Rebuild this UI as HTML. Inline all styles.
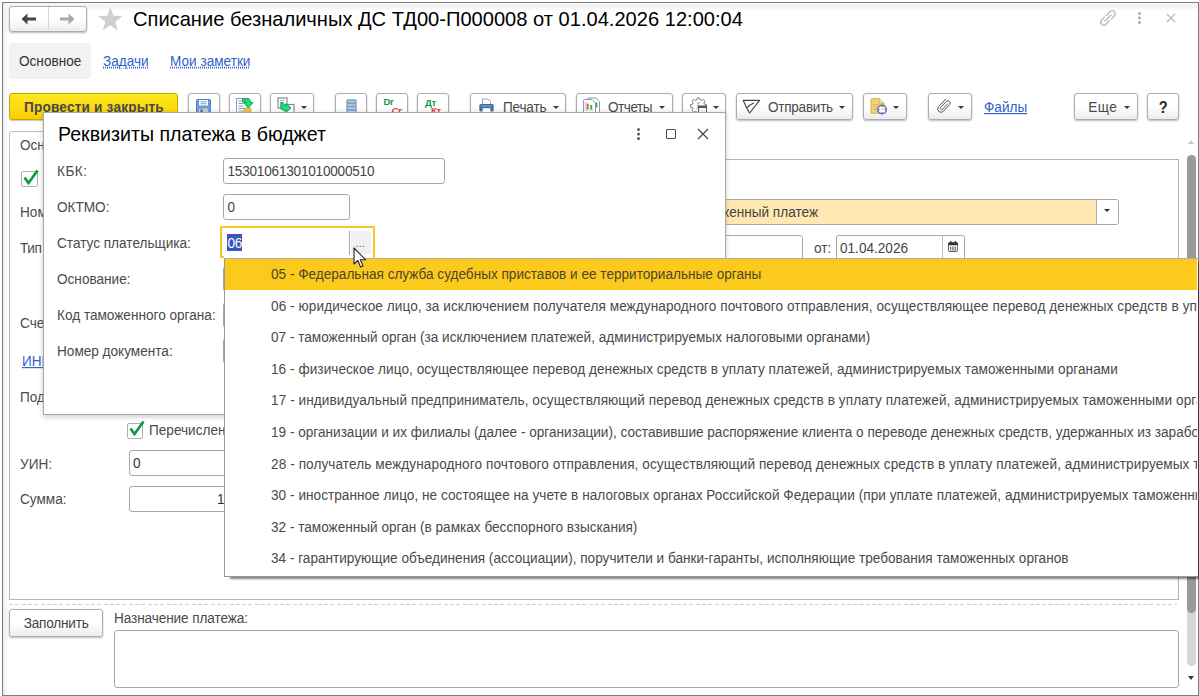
<!DOCTYPE html>
<html lang="ru">
<head>
<meta charset="utf-8">
<title>Списание безналичных ДС</title>
<style>
*{box-sizing:border-box;margin:0;padding:0}
html,body{width:1199px;height:696px;overflow:hidden;background:#fff}
body{font-family:"Liberation Sans",Arial,sans-serif;font-size:13.6px;color:#4a4a4a;position:relative;line-height:16px}
.a{position:absolute;white-space:nowrap}
.s{transform:translateY(1px) scaleY(1.14);transform-origin:0 12.7px}
.li span{display:inline-block;transform:scaleY(1.14);transform-origin:0 20.5px}
.btn{border:1px solid #adadad;border-radius:3px;background:linear-gradient(#fff 0%,#fff 50%,#ececec 100%);box-shadow:0 1px 2px rgba(0,0,0,.28);height:27px;top:93px}
.inp{border:1px solid #a8a8a8;border-radius:3px;background:#fff;height:26px}
.lnk{color:#2f5fc9;text-decoration:underline}
.car{width:0;height:0;border-left:3.4px solid transparent;border-right:3.4px solid transparent;border-top:3.8px solid #3a3a3a;top:105.8px}
.t{top:99px;color:#4a4a4a}
.li{left:225px;width:972px;height:31.6px;line-height:31.6px;padding-left:46px;color:#4a4a4a;overflow:hidden}
</style>
</head>
<body>
<!-- window frame -->
<div class="a" style="left:2px;top:2px;width:1197px;height:694px;border:1px solid #7d7d7d;background:#fff"></div>
<div class="a" style="left:3px;top:3px;width:1195px;height:8px;background:linear-gradient(#fafafa,#f1f1f1 40%,#fff)"></div>
<div class="a" style="left:3px;top:3px;width:6px;height:692px;background:linear-gradient(90deg,#ececec,#fff)"></div>

<!-- header -->
<div class="a btn" style="left:9px;top:6px;width:78px;height:26px"></div>
<div class="a" style="left:48px;top:7px;width:1px;height:23px;background:#d4d4d4"></div>
<svg class="a" style="left:21px;top:13px" width="16" height="12" viewBox="0 0 16 12"><path d="M0.5 6 L6.5 0.5 L6.5 4.6 L15 4.6 L15 7.4 L6.5 7.4 L6.5 11.5 Z" fill="#454545"/></svg>
<svg class="a" style="left:59px;top:13px" width="16" height="12" viewBox="0 0 16 12"><path d="M15.5 6 L9.5 0.5 L9.5 4.6 L1 4.6 L1 7.4 L9.5 7.4 L9.5 11.5 Z" fill="#a9a9a9"/></svg>
<svg class="a" style="left:97px;top:6px" width="26.6" height="25.6" viewBox="0 0 26 25"><path d="M13 1 L16 9.6 L25 9.8 L17.8 15.3 L20.4 24 L13 18.8 L5.6 24 L8.2 15.3 L1 9.8 L10 9.6 Z" fill="#cfcfcf"/></svg>
<div class="a" id="title" style="left:133px;top:7px;font-size:20.1px;line-height:24px;color:#000;transform:scaleY(1.05);transform-origin:0 19px">Списание безналичных ДС ТД00-П000008 от 01.04.2026 12:00:04</div>
<svg class="a" style="left:1098px;top:9px" width="20" height="18" viewBox="0 0 20 18" fill="none" stroke="#b9b9b9" stroke-width="1.4" stroke-linecap="round"><path d="M8.5 6.2 L12 2.7 A3 3 0 0 1 16.3 7 L13.6 9.7"/><path d="M11.5 11.8 L8 15.3 A3 3 0 0 1 3.7 11 L6.4 8.3"/><path d="M7 12 L13 6"/></svg>
<svg class="a" style="left:1137px;top:11px" width="5" height="14" viewBox="0 0 5 14" fill="#ababab"><circle cx="2.5" cy="2.5" r="1.5"/><circle cx="2.5" cy="7" r="1.5"/><circle cx="2.5" cy="11.5" r="1.5"/></svg>
<svg class="a" style="left:1166px;top:13px" width="10" height="10" viewBox="0 0 10 10" stroke="#b5b5b5" stroke-width="1.1" fill="none"><path d="M1 1 L9 9 M9 1 L1 9"/></svg>

<!-- tabs -->
<div class="a" style="left:9px;top:43px;width:82px;height:36px;background:#f2f2f2;border-radius:4px"></div>
<div class="a s" style="left:19px;top:53px;color:#333">Основное</div>
<div class="a s lnk" style="left:103px;top:53px;text-decoration-style:dotted">Задачи</div>
<div class="a s lnk" style="left:170px;top:53px;text-decoration-style:dotted">Мои заметки</div>

<!-- toolbar -->
<div class="a" style="left:9px;top:93px;width:169px;height:27px;border:1px solid #c6a700;border-radius:3px;background:linear-gradient(#ffe81f,#f8d000);box-shadow:0 1px 1px rgba(0,0,0,.22)"></div>
<div class="a s" style="left:24px;top:99px;font-weight:bold;color:#47474f;letter-spacing:.2px">Провести и закрыть</div>
<div class="a btn" style="left:188px;width:32px"></div>
<div class="a btn" style="left:229px;width:32px"></div>
<div class="a btn" style="left:270px;width:44px"></div>
<div class="a btn" style="left:335px;width:32px"></div>
<div class="a btn" style="left:376px;width:32px"></div>
<div class="a btn" style="left:417px;width:32px"></div>
<div class="a btn" style="left:470px;width:96px"></div>
<div class="a btn" style="left:576px;width:97px"></div>
<div class="a btn" style="left:682px;width:44px"></div>
<div class="a btn" style="left:736px;width:117px"></div>
<div class="a btn" style="left:863px;width:44px"></div>
<div class="a btn" style="left:928px;width:44px"></div>
<div class="a btn" style="left:1074px;width:64px"></div>
<div class="a btn" style="left:1147px;width:32px"></div>
<div class="a s t" style="left:503px;letter-spacing:-0.2px">Печать</div><div class="a car" style="left:552.5px"></div>
<div class="a s t" style="left:608px;letter-spacing:-0.5px">Отчеты</div><div class="a car" style="left:658.9px"></div>
<div class="a car" style="left:712.8px"></div>
<div class="a s t" style="left:768px;letter-spacing:-0.28px">Отправить</div><div class="a car" style="left:839.3px"></div>
<div class="a car" style="left:893.1px"></div>
<div class="a car" style="left:958.1px"></div>
<div class="a s lnk" style="left:984px;top:99px">Файлы</div>
<div class="a s t" style="left:1088.3px;letter-spacing:.4px">Еще</div><div class="a car" style="left:1123.7px"></div>
<div class="a s" style="left:1158.7px;top:99px;font-weight:bold;color:#222;font-size:14.5px;line-height:16px">?</div>
<div class="a car" style="left:300.5px"></div>


<!-- toolbar icons -->
<svg class="a" style="left:196px;top:99px" width="15" height="15" viewBox="0 0 15 15"><rect x="0.5" y="0.5" width="14" height="14" rx="1" fill="#6e9bd8" stroke="#4f7fc0"/><rect x="3" y="1" width="9" height="5.5" fill="#fff"/><path d="M4.5 2.8h6M4.5 4.8h6" stroke="#6e9bd8" stroke-width="1"/><rect x="3" y="9.5" width="9" height="5" fill="#c9c9c9"/><rect x="4.5" y="10.5" width="2" height="3.5" fill="#2f5fae"/></svg>
<svg class="a" style="left:236px;top:98px" width="18" height="16" viewBox="0 0 18 16"><rect x="0.5" y="0.5" width="12" height="15" fill="#fff" stroke="#8aa0bd"/><path d="M2.5 3h4M2.5 5.5h5M2.5 8h5M2.5 10.5h6M2.5 13h6" stroke="#8c9cb3" stroke-width="1"/><rect x="8" y="10" width="7" height="5" fill="#e8c24a" stroke="#c9a22f" stroke-width=".6"/><path d="M6.5 0.8 L12.5 0.8 Q14.3 1 14.3 3 L14.3 4.6 L17 4.6 L12.3 10 L7.6 4.6 L10.6 4.6 L10.6 3.9 L6.5 3.9 Z" fill="#1fe07a" stroke="#0c9a46" stroke-width=".9" stroke-linejoin="round"/></svg>
<svg class="a" style="left:277px;top:97px" width="18" height="17" viewBox="0 0 18 17"><rect x="1" y="1" width="9" height="10" fill="#fff" stroke="#7c8ba1" stroke-width="1.2"/><path d="M3 3.5h5" stroke="#a9b6c9" stroke-width="1"/><rect x="8" y="7.5" width="9" height="9" fill="#fff" stroke="#7c8ba1" stroke-width="1.2"/><path d="M3.8 5.5 L6.3 5.5 L6.3 8.6 L9.2 8.6 L9.2 6.6 L14 11 L9.2 15.2 L9.2 13 L5.6 13 Q3.8 12.8 3.8 11 Z" fill="#1fe07a" stroke="#0c9a46" stroke-width=".9" stroke-linejoin="round"/></svg>
<svg class="a" style="left:346px;top:99px" width="11" height="15" viewBox="0 0 11 15"><rect x="0.3" y="0.3" width="10.4" height="14.4" rx="1.5" fill="#7f9fc0"/><path d="M1.5 2.6h8M1.5 5.9h8M1.5 9.2h8M1.5 12.5h8" stroke="#b9cde1" stroke-width="1.5"/></svg>
<div class="a" style="left:383.5px;top:96px;font-size:9.5px;line-height:12px;font-weight:bold;color:#0f9a4a;letter-spacing:-0.3px">Dr</div>
<div class="a" style="left:391.5px;top:104.5px;font-size:9.5px;line-height:12px;font-weight:bold;font-style:italic;color:#e03a3a;letter-spacing:-0.3px">Cr</div>
<div class="a" style="left:425px;top:96.5px;font-size:9.5px;line-height:12px;font-weight:bold;color:#0f9a4a;letter-spacing:-0.2px">Дт</div>
<div class="a" style="left:431px;top:105px;font-size:9.5px;line-height:12px;font-weight:bold;color:#e03a3a;letter-spacing:-0.2px">Кт</div>
<svg class="a" style="left:479px;top:98px" width="15" height="15" viewBox="0 0 15 15"><path d="M3.5 6.5 L3.5 1 L9 1 L11.5 3.5 L11.5 6.5" fill="#fff" stroke="#8fa3be" stroke-width="1"/><rect x="0.3" y="6" width="14.4" height="7.5" rx="1.6" fill="#3f6fa8"/><path d="M2 8h11" stroke="#8fb0d8" stroke-width="1"/><rect x="3.6" y="10.2" width="7.8" height="4.8" fill="#fff"/></svg>
<svg class="a" style="left:583px;top:97px" width="18" height="17" viewBox="0 0 18 17"><path d="M5 3 L5 1 L13 1 L16.5 4.5 L16.5 17 L12.5 17" fill="#fff" stroke="#8a9bb0" stroke-width="1"/><path d="M0.5 3.5 Q0.5 2.5 1.5 2.5 L9 2.5 L12.5 6 L12.5 17 L0.5 17 Z" fill="#fff" stroke="#8a9bb0" stroke-width="1"/><rect x="3.6" y="6.5" width="2" height="6" fill="#f04a3a"/><rect x="7.2" y="8" width="2" height="4.5" fill="#35b535"/><rect x="12.8" y="5.5" width="1.6" height="5" fill="#35b535"/><path d="M2.2 5v8.2h8.8" stroke="#b7c3d1" stroke-width=".8" fill="none"/></svg>
<svg class="a" style="left:689px;top:97px" width="21" height="17" viewBox="0 0 21 17"><path d="M8.3 1 L10.7 1 L11.2 2.9 L12.5 3.5 L14.2 2.5 L15.9 4.2 L14.9 5.9 L15.5 7.2 L17.4 7.7 L17.4 10.1 L15.5 10.6 L14.9 11.9 L15.9 13.6 L14.2 15.3 L12.5 14.3 L11.2 14.9 L10.7 16.8 L8.3 16.8 L7.8 14.9 L6.5 14.3 L4.8 15.3 L3.1 13.6 L4.1 11.9 L3.5 10.6 L1.6 10.1 L1.6 7.7 L3.5 7.2 L4.1 5.9 L3.1 4.2 L4.8 2.5 L6.5 3.5 L7.8 2.9 Z" fill="#fff" stroke="#6b6b6b" stroke-width=".9" stroke-linejoin="round"/><path d="M8 6.5 L10.5 5.5 M8 9 L9.5 7.5 M7.6 11.5 L9 10" stroke="#777" stroke-width=".9"/><rect x="9.5" y="9" width="8" height="8" fill="#f4f4f4" stroke="#555" stroke-width="1"/><rect x="9.5" y="9" width="8" height="2" fill="#555"/></svg>
<svg class="a" style="left:742px;top:99px" width="19" height="16" viewBox="0 0 19 16"><path d="M1.2 1.3 L17.6 1.3 L7.6 14 L4.8 9.2 Z" fill="none" stroke="#444" stroke-width="1.15" stroke-linejoin="round"/><path d="M4.9 9 Q7.5 5.5 12 4" fill="none" stroke="#444" stroke-width="1.1"/></svg>
<svg class="a" style="left:870px;top:98px" width="18" height="17" viewBox="0 0 18 17"><path d="M1 1.5 Q1 0.7 1.8 0.7 L9.5 0.7 L14 5 L14 15.3 L1 15.3 Z" fill="#f0d37a" stroke="#d6b244" stroke-width="1"/><path d="M9.5 0.7 L9.5 5 L14 5" fill="#f8e7aa" stroke="#d6b244" stroke-width=".8"/><path d="M3 6.5h5M3 9h4M3 11.5h3" stroke="#d9bb58" stroke-width="1"/><circle cx="12" cy="11.5" r="4.3" fill="#fff" stroke="#3f78c4" stroke-width="1.5"/><path d="M12 7.9v1.2M12 13.9v1.2M8.4 11.5h1.2M14.4 11.5h1.2" stroke="#e84545" stroke-width="1.3"/><path d="M12 11.5 L13.6 9.8" stroke="#5d8fd0" stroke-width=".9"/></svg>
<svg class="a" style="left:936px;top:97px" width="16" height="17" viewBox="0 0 16 17" fill="none" stroke="#555" stroke-width="1" stroke-linecap="round"><path d="M9.6 2.2 L2.6 9.6 A3.3 3.3 0 0 0 7.4 14.2 L13.6 7.6 A2.3 2.3 0 0 0 10.3 4.4 L4.7 10.4 A1.3 1.3 0 0 0 6.6 12.2 L11.6 6.9"/></svg>

<!-- main panel -->
<div class="a" style="left:9px;top:131px;width:60px;height:30px;border:1px solid #c0c0c0;border-bottom:none;border-radius:3px 3px 0 0;background:#fff"></div>
<div class="a" style="left:9px;top:159px;width:1170px;height:441px;border:1px solid #b4b4b4;border-top-color:#b4b4b4;background:#fff"></div>
<div class="a" style="left:10px;top:159px;width:58px;height:2px;background:#fff"></div>
<div class="a s" style="left:20px;top:137px">Основное</div>
<div class="a" style="left:21px;top:171px;width:17px;height:16px;border:1px solid #b0b0b0;border-radius:2px;background:#fff"></div>
<svg class="a" style="left:22px;top:168px" width="18" height="18" viewBox="0 0 18 18"><path d="M2.5 9.5 L6.5 15 L15.5 2.5" fill="none" stroke="#0a9a3e" stroke-width="2.6"/></svg>
<div class="a s" style="left:20px;top:204px">Номер:</div>
<div class="a s" style="left:20px;top:240px;letter-spacing:-.4px">Тип документа:</div>
<div class="a s" style="left:20px;top:315px">Счет:</div>
<div class="a s lnk" style="left:22px;top:353px">ИНН</div>
<div class="a s" style="left:20px;top:389px">Подразделение:</div>
<div class="a" style="left:127px;top:423px;width:16px;height:16px;border:1px solid #b0b0b0;border-radius:2px;background:#fff"></div>
<svg class="a" style="left:128px;top:419px" width="18" height="18" viewBox="0 0 18 18"><path d="M2.5 9.5 L6.5 15 L15.5 2.5" fill="none" stroke="#0a9a3e" stroke-width="2.6"/></svg>
<div class="a s" style="left:149px;top:422px">Перечисление в бюджет</div>
<div class="a s" style="left:20px;top:456px">УИН:</div>
<div class="a inp" style="left:129px;top:450px;width:300px"></div>
<div class="a s" style="left:133px;top:455px;color:#333">0</div>
<div class="a s" style="left:20px;top:491px">Сумма:</div>
<div class="a inp" style="left:129px;top:486px;width:300px"></div>
<div class="a s" style="left:217px;top:491px;color:#333">1</div>
<div class="a inp" style="left:500px;top:199px;width:619px;background:#ffe8b2;border-color:#a8a8a8"></div>
<div class="a" style="left:1095.5px;top:200px;width:22.5px;height:24px;background:#fff;border-left:1px solid #b0b0b0;border-radius:0 2px 2px 0"></div>
<div class="a" style="left:1103.5px;top:209.2px;width:0;height:0;border-left:3.2px solid transparent;border-right:3.2px solid transparent;border-top:3.6px solid #333"></div>
<div class="a s" style="right:381px;top:204px;color:#444">Таможенный платеж</div>
<div class="a inp" style="left:500px;top:235px;width:303px"></div>
<div class="a s" style="left:814px;top:240px">от:</div>
<div class="a inp" style="left:836px;top:235px;width:129px"></div>
<div class="a" style="left:942px;top:236px;width:1px;height:24px;background:#c0c0c0"></div>
<div class="a s" style="left:840px;top:240px;color:#444">01.04.2026</div>
<svg class="a" style="left:947.5px;top:241px" width="10.2" height="11" viewBox="0 0 12 13"><rect x="0.5" y="2" width="11" height="10.5" rx="1.5" fill="#fff" stroke="#333" stroke-width="1"/><rect x="0.5" y="2" width="11" height="3" fill="#333"/><rect x="2.5" y="0" width="1.6" height="3" fill="#333"/><rect x="7.9" y="0" width="1.6" height="3" fill="#333"/><path d="M3 6.5v5M5 6.5v5M7 6.5v5M9 6.5v5" stroke="#555" stroke-width="1"/></svg>

<!-- scrollbar -->
<div class="a" style="left:1187px;top:155px;width:9px;height:511px;border-radius:4.5px;background:#d6d6d6"></div>
<div class="a" style="left:1187px;top:155px;width:9px;height:458px;border-radius:4.5px;background:#999"></div>
<div class="a" style="left:1187.8px;top:140px;width:0;height:0;border-left:3.5px solid transparent;border-right:3.5px solid transparent;border-bottom:4.5px solid #c6c6c6"></div>
<div class="a" style="left:1188.2px;top:676.4px;width:0;height:0;border-left:3.3px solid transparent;border-right:3.3px solid transparent;border-top:4.3px solid #3a3a3a"></div>

<!-- bottom -->
<div class="a" style="left:9px;top:604px;width:1168px;height:1px;background:repeating-linear-gradient(90deg,#cfcfcf 0,#cfcfcf 4px,transparent 4px,transparent 6.3px)"></div>
<div class="a btn" style="left:9px;top:609px;width:94px;height:28px"></div>
<div class="a s" style="left:23.7px;top:615px;color:#444;letter-spacing:-.2px">Заполнить</div>
<div class="a s" style="left:114px;top:610px;letter-spacing:-.1px">Назначение платежа:</div>
<div class="a inp" style="left:114px;top:630px;width:1065px;height:58px"></div>

<!-- dialog -->
<div class="a" style="left:43px;top:112px;width:683px;height:303px;background:#fff;border:1px solid #a6a6a6;box-shadow:0 2px 5px rgba(0,0,0,.2)"></div>
<div class="a" style="left:58px;top:122px;font-size:19.6px;line-height:24px;color:#000;transform:scaleY(1.05);transform-origin:0 19px">Реквизиты платежа в бюджет</div>
<svg class="a" style="left:636px;top:127px" width="5" height="14" viewBox="0 0 5 14" fill="#5a5a5a"><circle cx="2.5" cy="2.5" r="1.5"/><circle cx="2.5" cy="7" r="1.5"/><circle cx="2.5" cy="11.5" r="1.5"/></svg>
<div class="a" style="left:666px;top:129px;width:10px;height:10px;border:1.5px solid #484848;border-radius:1px"></div>
<svg class="a" style="left:697px;top:128px" width="12" height="12" viewBox="0 0 12 12" stroke="#444" stroke-width="1.2" fill="none"><path d="M1 1 L11 11 M11 1 L1 11"/></svg>
<div class="a s" style="left:57px;top:163px;letter-spacing:.5px">КБК:</div>
<div class="a s" style="left:57px;top:199px">ОКТМО:</div>
<div class="a s" style="left:57px;top:235px">Статус плательщика:</div>
<div class="a s" style="left:57px;top:271px">Основание:</div>
<div class="a s" style="left:57px;top:307px">Код таможенного органа:</div>
<div class="a s" style="left:57px;top:343px">Номер документа:</div>
<div class="a inp" style="left:223px;top:158px;width:222px"></div>
<div class="a s" style="left:227.5px;top:163px;color:#444;letter-spacing:-.22px">15301061301010000510</div>
<div class="a inp" style="left:223px;top:194px;width:127px"></div>
<div class="a s" style="left:227.5px;top:199px;color:#444">0</div>
<div class="a inp" style="left:223px;top:266px;width:127px"></div>
<div class="a inp" style="left:223px;top:302px;width:127px"></div>
<div class="a inp" style="left:223px;top:338px;width:127px"></div>
<div class="a" style="left:220px;top:226px;width:155.3px;height:32.4px;border:2px solid #fbc61d;border-radius:1px;background:#fff"></div><div class="a" style="left:224px;top:255px;width:149.3px;height:3px;background:#fff"></div>
<div class="a" style="left:349px;top:230.5px;width:1.2px;height:24px;background:#a8a8a8"></div><div class="a" style="left:351.4px;top:231px;width:19.6px;height:23px;background:#f0f0f0;border-radius:2px"></div>
<div class="a" style="left:355.5px;top:237px;color:#555;font-size:11px;line-height:12px;letter-spacing:0.2px">...</div>
<div class="a" style="left:227px;top:234px;width:15px;height:17px;background:#3a56c0"></div>
<div class="a s" style="left:227.5px;top:235px;color:#fff;letter-spacing:-.3px">06</div>

<!-- dropdown list -->
<div class="a" style="left:224px;top:258px;width:974px;height:319px;background:#fff;border:1px solid #999;border-top-color:#adadad;border-right:none;box-shadow:5px 3px 2px -1px rgba(0,0,0,.5)"></div>
<div class="a li" style="top:259px;height:30.5px;background:#fbca1d;color:#4d4628"><span>05 - Федеральная служба судебных приставов и ее территориальные органы</span></div>
<div class="a li" style="top:290.6px"><span style="letter-spacing:0.075px">06 - юридическое лицо, за исключением получателя международного почтового отправления, осуществляющее перевод денежных средств в уплату платежей, администрируемых таможенными органами</span></div>
<div class="a li" style="top:322.2px"><span>07 - таможенный орган (за исключением платежей, администрируемых налоговыми органами)</span></div>
<div class="a li" style="top:353.8px"><span style="letter-spacing:0.052px">16 - физическое лицо, осуществляющее перевод денежных средств в уплату платежей, администрируемых таможенными органами</span></div>
<div class="a li" style="top:385.4px"><span style="letter-spacing:0.076px">17 - индивидуальный предприниматель, осуществляющий перевод денежных средств в уплату платежей, администрируемых таможенными органами</span></div>
<div class="a li" style="top:417px"><span>19 - организации и их филиалы (далее - организации), составившие распоряжение клиента о переводе денежных средств, удержанных из заработной платы</span></div>
<div class="a li" style="top:448.6px"><span style="letter-spacing:0.086px">28 - получатель международного почтового отправления, осуществляющий перевод денежных средств в уплату платежей, администрируемых таможенными органами</span></div>
<div class="a li" style="top:480.2px"><span style="letter-spacing:0.036px">30 - иностранное лицо, не состоящее на учете в налоговых органах Российской Федерации (при уплате платежей, администрируемых таможенными органами)</span></div>
<div class="a li" style="top:511.8px"><span>32 - таможенный орган (в рамках бесспорного взыскания)</span></div>
<div class="a li" style="top:543.4px"><span>34 - гарантирующие объединения (ассоциации), поручители и банки-гаранты, исполняющие требования таможенных органов</span></div>

<!-- cursor -->
<svg class="a" style="left:353px;top:247px" width="14" height="22" viewBox="0 0 14 22"><path d="M1 1 L1 17 L4.8 13.5 L7.6 20 L10 19 L7.3 12.7 L12.5 12.7 Z" fill="#fff" stroke="#23233a" stroke-width="1.1" stroke-linejoin="round"/></svg>
</body>
</html>
